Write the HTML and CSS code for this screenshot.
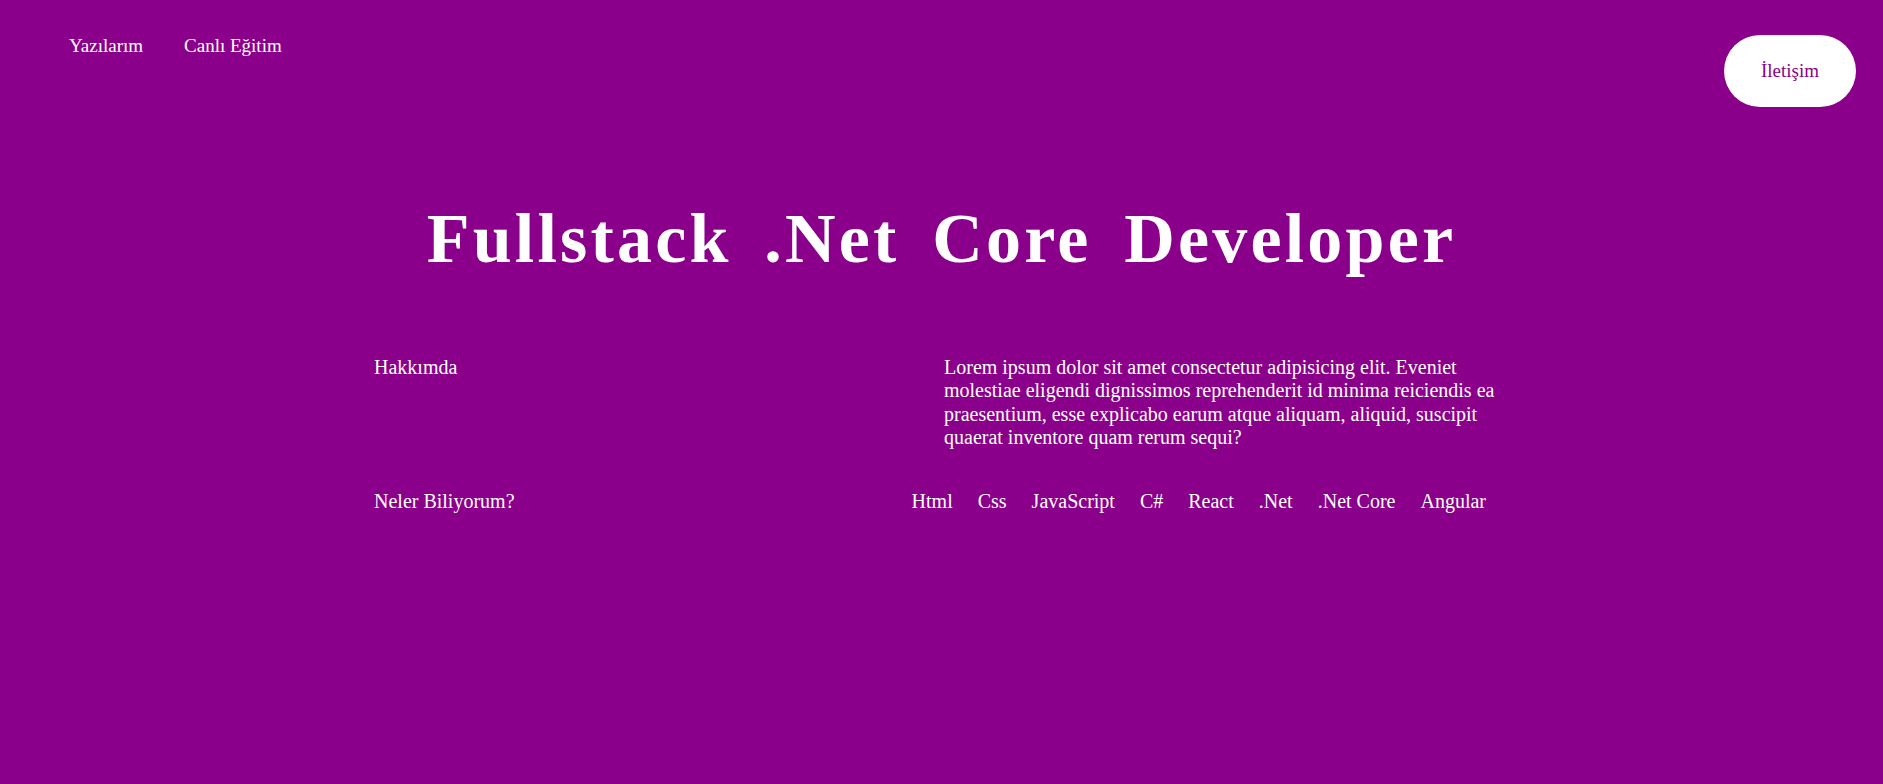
FILE: index.html
```html
<!DOCTYPE html>
<html lang="tr">
<head>
<meta charset="utf-8">
<title>Fullstack .Net Core Developer</title>
<link rel="stylesheet" href="styles.css">
</head>
<body>
<header class="header">
  <nav class="nav">
    <a class="nav-link" href="#">Yazılarım</a>
    <a class="nav-link" href="#">Canlı Eğitim</a>
  </nav>
  <a class="contact-btn" href="#">İletişim</a>
</header>
<main class="main">
  <h1 class="title">Fullstack .Net Core Developer</h1>
  <section class="content">
    <div class="row">
      <div class="row-label">Hakkımda</div>
      <p class="about">Lorem ipsum dolor sit amet consectetur adipisicing elit. Eveniet molestiae eligendi dignissimos reprehenderit id minima reiciendis ea praesentium, esse explicabo earum atque aliquam, aliquid, suscipit quaerat inventore quam rerum sequi?</p>
    </div>
    <div class="row row-skills">
      <div class="row-label">Neler Biliyorum?</div>
      <ul class="skills">
        <li>Html</li>
        <li>Css</li>
        <li>JavaScript</li>
        <li>C#</li>
        <li>React</li>
        <li>.Net</li>
        <li>.Net Core</li>
        <li>Angular</li>
      </ul>
    </div>
  </section>
</main>
</body>
</html>
```
FILE: styles.css
```css
html, body {
  margin: 0;
  padding: 0;
}
body {
  background: #8b008b;
  color: #ffffff;
  font-family: "Liberation Serif", "Times New Roman", serif;
  min-height: 784px;
}
.header {
  display: flex;
  justify-content: space-between;
  align-items: flex-start;
  padding: 35px 27px 0 69px;
}
.nav {
  display: flex;
  gap: 41px;
}
.nav-link {
  color: #ffffff;
  text-decoration: none;
  font-size: 19px;
}
.contact-btn {
  display: block;
  background: #ffffff;
  color: #8b008b;
  text-decoration: none;
  font-size: 19px;
  padding: 25px 37px 25px;
  border-radius: 36px;
}
.title {
  margin: 92px 0 0;
  text-align: center;
  font-size: 70px;
  font-weight: bold;
  letter-spacing: 3.2px;
  word-spacing: 12px;
  line-height: 80px;
}
.content {
  width: 1135px;
  margin: 77px auto 0;
}
.row {
  display: flex;
  justify-content: space-between;
  align-items: flex-start;
  font-size: 20px;
  line-height: 23.4px;
}
.row-skills {
  margin-top: 40px;
}
.about {
  margin: 0;
  width: 565px;
}
.skills {
  display: flex;
  gap: 25px;
  list-style: none;
  margin: 0;
  padding: 0 23px 0 0;
}
```
